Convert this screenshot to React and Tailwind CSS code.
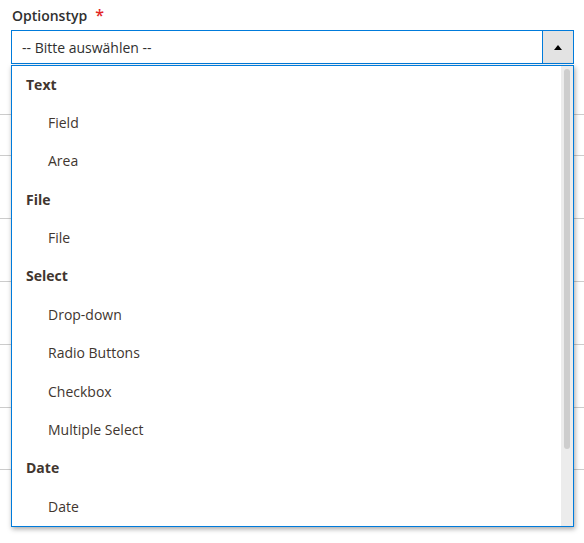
import React from "react";

const options = [
  { label: "Text", group: true },
  { label: "Field" },
  { label: "Area" },
  { label: "File", group: true },
  { label: "File" },
  { label: "Select", group: true },
  { label: "Drop-down" },
  { label: "Radio Buttons" },
  { label: "Checkbox" },
  { label: "Multiple Select" },
  { label: "Date", group: true },
  { label: "Date" },
];

// hintergrund-zeilen der tabelle hinter dem dropdown
const rowHeights = ["h-[51px]", "h-[41px]", "h-[63px]", "h-[63px]", "h-[63px]", "h-[63px]", "h-[62px]"];

const App = () => {
  return (
    <div
      className="relative w-[584px] h-[543px] overflow-hidden bg-white text-[#303030]"
      style={{ fontFamily: '"Open Sans", "Liberation Sans", sans-serif' }}
    >
      {/* Label */}
      <div className="flex items-start h-[30px] pl-[12px] pt-[6px]">
        <span className="text-[14px] font-semibold leading-[20px] text-[#303030]">Optionstyp</span>
        <span className="ml-[8px] text-[16px] font-semibold leading-[18px] text-[#e22626]">*</span>
      </div>

      {/* Select */}
      <div className="ml-[11px] w-[563px] h-[34px] flex border border-[#007bdb] bg-white">
        <div className="flex-1 flex items-center pl-[10px] text-[14px] text-[#303030]">
          -- Bitte auswählen --
        </div>
        <div className="w-[31px] h-full flex items-center justify-center bg-[#e3e3e3] border-l border-[#007bdb]">
          <div className="w-0 h-0 border-l-[4px] border-r-[4px] border-b-[5px] border-l-transparent border-r-transparent border-b-black" />
        </div>
      </div>

      {/* Tabellenzeilen im Hintergrund */}
      <div>
        {rowHeights.map((h, i) => (
          <div key={i} className={`${h} border-b border-[#cccccc]`} />
        ))}
      </div>

      {/* Dropdown */}
      <div className="absolute top-[65px] left-[11px] w-[563px] h-[462px] flex bg-white border border-[#007bdb] shadow-[1px_2px_5px_rgba(0,0,0,0.35)]">
        <ul className="flex-1 -mt-[1px]">
          {options.map((opt, i) => (
            <li
              key={i}
              className={`h-[38.36px] flex items-center text-[14px] text-[#41362f] ${
                opt.group ? "pl-[14px] font-bold" : "pl-[36px]"
              }`}
            >
              {opt.label}
            </li>
          ))}
        </ul>
        <div className="w-[12px] h-full bg-[#ececec] flex justify-center pt-[3px]">
          <div className="w-[6px] h-[380px] rounded-full bg-[#cdcdcd]" />
        </div>
      </div>
    </div>
  );
};

export default App;
